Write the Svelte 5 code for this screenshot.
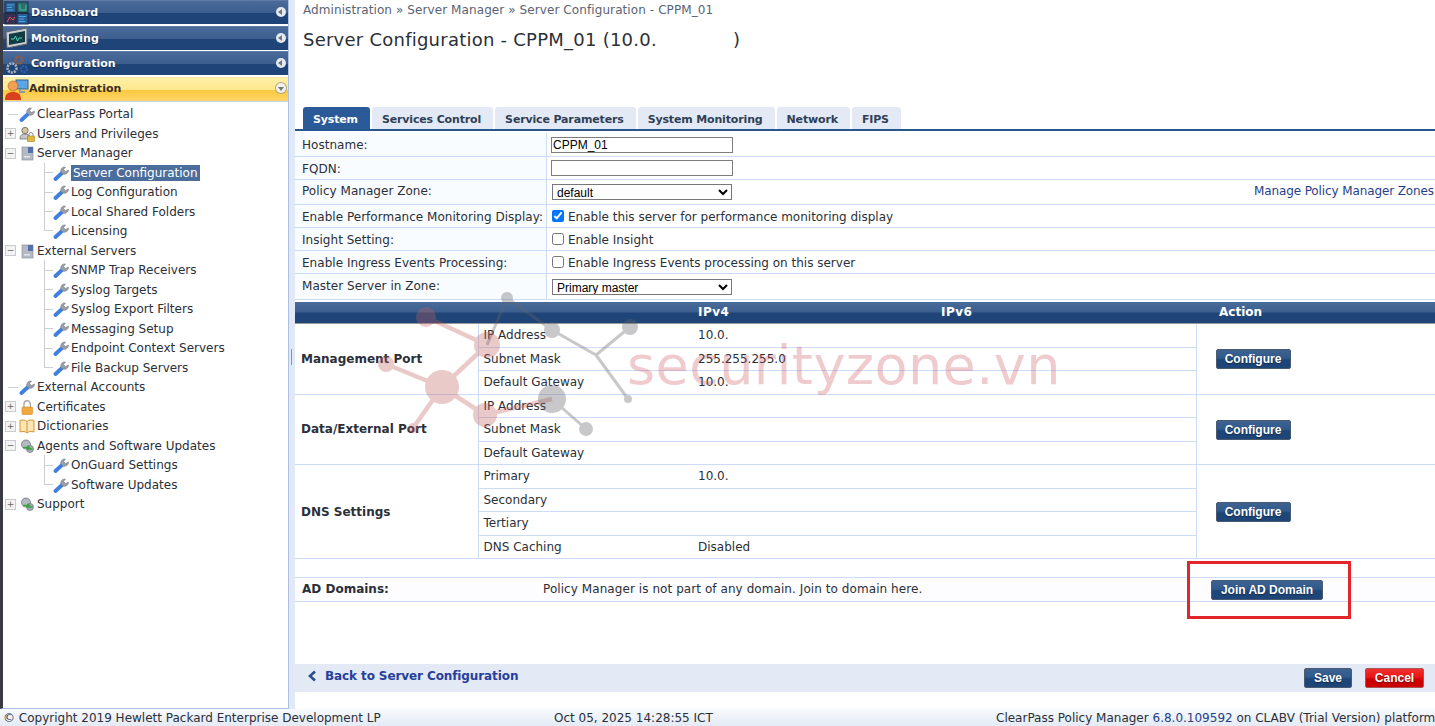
<script>
  const heads = [
    { id: 'dash', label: 'Dashboard' },
    { id: 'mon', label: 'Monitoring' },
    { id: 'conf', label: 'Configuration' }
  ];
  const tree = [
    { t: 'ClearPass Portal', d: 0, ic: 'w', ex: '' },
    { t: 'Users and Privileges', d: 0, ic: 'u', ex: '+' },
    { t: 'Server Manager', d: 0, ic: 's', ex: '-' },
    { t: 'Server Configuration', d: 1, ic: 'w', sel: true },
    { t: 'Log Configuration', d: 1, ic: 'w' },
    { t: 'Local Shared Folders', d: 1, ic: 'w' },
    { t: 'Licensing', d: 1, ic: 'w', last: true },
    { t: 'External Servers', d: 0, ic: 's', ex: '-' },
    { t: 'SNMP Trap Receivers', d: 1, ic: 'w' },
    { t: 'Syslog Targets', d: 1, ic: 'w' },
    { t: 'Syslog Export Filters', d: 1, ic: 'w' },
    { t: 'Messaging Setup', d: 1, ic: 'w' },
    { t: 'Endpoint Context Servers', d: 1, ic: 'w' },
    { t: 'File Backup Servers', d: 1, ic: 'w', last: true },
    { t: 'External Accounts', d: 0, ic: 'w', ex: '' },
    { t: 'Certificates', d: 0, ic: 'l', ex: '+' },
    { t: 'Dictionaries', d: 0, ic: 'b', ex: '+' },
    { t: 'Agents and Software Updates', d: 0, ic: 'g', ex: '-' },
    { t: 'OnGuard Settings', d: 1, ic: 'w' },
    { t: 'Software Updates', d: 1, ic: 'w', last: true },
    { t: 'Support', d: 0, ic: 'g', ex: '+' }
  ];
  const tabs = ['System', 'Services Control', 'Service Parameters', 'System Monitoring', 'Network', 'FIPS'];
  const groups = [
    { name: 'Management Port', rows: [['IP Address', '10.0.'], ['Subnet Mask', '255.255.255.0'], ['Default Gateway', '10.0.']] },
    { name: 'Data/External Port', rows: [['IP Address', ''], ['Subnet Mask', ''], ['Default Gateway', '']] },
    { name: 'DNS Settings', rows: [['Primary', '10.0.'], ['Secondary', ''], ['Tertiary', ''], ['DNS Caching', 'Disabled']] }
  ];
  const redEdges = [[426,317,487,345],[386,364,442,387],[487,345,442,387],[442,387,413,428],[442,387,485,415],[485,415,552,399]];
  const grayEdges = [[487,345,507,298],[507,298,552,330],[552,330,596,355],[630,327,596,355],[596,355,628,399],[552,399,586,429]];
  const redNodes = [[426,317,10],[487,345,13],[386,364,8],[442,387,17],[485,415,12],[413,428,5]];
  const grayNodes = [[507,298,6],[552,330,8],[630,327,8],[628,399,4],[552,399,14],[586,429,7]];
</script>

{#snippet icon(kind)}
  <svg class="ti" viewBox="0 0 16 16" aria-hidden="true">
    {#if kind === 'w'}
      <path d="M2.500 14 9 8" stroke="#3f7fe0" stroke-width="3.800" stroke-linecap="round" fill="none" />
      <path d="M8 7.500a4 4 0 0 1 4.500-5.500l-2 2.500 2 2 3-1.500a4 4 0 0 1-5.500 4z" fill="#9a9fa8" stroke="#6c7078" stroke-width=".5" />
    {:else if kind === 'u'}
      <circle cx="6" cy="4.500" r="3.200" fill="#d8c2a6" stroke="#555" stroke-width=".7" />
      <path d="M1 13c0-4 2-5 5-5s5 1 5 5z" fill="#c3c7cc" stroke="#666" stroke-width=".7" />
      <rect x="8.500" y="10" width="7" height="5.500" fill="#e2b93b" stroke="#a58520" stroke-width=".6" />
      <path d="M10 10V8.500a2 2 0 0 1 4 0V10" fill="none" stroke="#888" stroke-width="1" />
    {:else if kind === 's'}
      <rect x="3" y="2" width="11" height="13" fill="#b4bac4" stroke="#8d94a0" stroke-width=".7" />
      <rect x="9" y="2" width="5" height="6" fill="#5470a8" />
      <rect x="5" y="11" width="6" height="1.500" fill="#e4e6ea" />
    {:else if kind === 'l'}
      <path d="M5 8V5a3.200 3.200 0 0 1 6.400 0v3" fill="none" stroke="#a8a8a8" stroke-width="1.400" />
      <rect x="3" y="8" width="10.500" height="7.500" rx="1" fill="#f0a93f" stroke="#cf8a28" stroke-width=".6" />
    {:else if kind === 'b'}
      <path d="M1 2.500C4 1.500 6.500 2 8 3.500 9.500 2 12 1.500 15 2.500V14C12 13 9.500 13.500 8 15 6.500 13.500 4 13 1 14z" fill="#fbe6b6" stroke="#d9932d" stroke-width="1" />
      <path d="M8 3.500V15" stroke="#d9932d" stroke-width="1" />
    {:else}
      <circle cx="7" cy="6.500" r="4.500" fill="#b4bac2" stroke="#6e7580" stroke-width=".8" />
      <circle cx="11" cy="11" r="3.500" fill="#a5acb5" stroke="#6e7580" stroke-width=".7" />
      <path d="M4 9.500h6l-1.500-1.800M13.500 11H7.500" fill="none" stroke="#36a63c" stroke-width="1.500" />
    {/if}
  </svg>
{/snippet}

{#snippet headIcon(id)}
  <svg class="hi" viewBox="0 0 26 24" aria-hidden="true">
    {#if id === 'dash'}
      <rect x="1" y="1" width="11" height="10.500" fill="#2e5f94" stroke="#1c2c44" />
      <rect x="13" y="1" width="11" height="10.500" fill="#2f6e6e" stroke="#1c2c44" />
      <rect x="1" y="12.500" width="11" height="10.500" fill="#3a2f4f" stroke="#1c2c44" />
      <rect x="13" y="12.500" width="11" height="10.500" fill="#2a5f9a" stroke="#1c2c44" />
      <path d="M3 4h7M3 6.500h5M3 9h6M15 15.500h7M15 18h5M15 20.500h6" stroke="#4fa6e6" stroke-width="1.200" />
      <path d="M16 9V3.500M16 9h6V4" stroke="#40c0a0" fill="none" />
      <path d="M3 21l3-5 3 3 2-3" stroke="#e45a5a" fill="none" />
    {:else if id === 'mon'}
      <path d="M2 5 23 1v16L3 21z" fill="#c9cdd2" stroke="#5f6469" />
      <path d="M5 7 21 4v11L5 18z" fill="#113c44" />
      <path d="M7 12h3l1.500-3 2 5 1.500-3h3" stroke="#48d8b8" fill="none" />
    {:else if id === 'conf'}
      <circle cx="15" cy="8" r="3.500" fill="none" stroke="#9c5a3c" stroke-width="2.400" stroke-dasharray="2 1" />
      <circle cx="8" cy="16" r="4.500" fill="none" stroke="#aab0b8" stroke-width="2.600" stroke-dasharray="2 1" />
      <circle cx="20" cy="17" r="3" fill="none" stroke="#2f5fb0" stroke-width="2.200" stroke-dasharray="2 1" />
    {:else}
      <rect x="12" y="2" width="12" height="9" fill="#5aa6e8" stroke="#35618e" />
      <path d="M16 11v3h5" stroke="#8c98a8" stroke-width="2" fill="none" />
      <circle cx="9" cy="8" r="5" fill="#f0a050" stroke="#b26226" stroke-width=".6" />
      <path d="M1 22c0-6 3-8 8-8s8 2 8 8z" fill="#d8401e" />
    {/if}
  </svg>
{/snippet}

<div class="page">
  <aside class="side">
    <nav class="accordion">
      {#each heads as h}
        <div class="head">
          {@render headIcon(h.id)}
          <span>{h.label}</span>
          <i class="arrow"></i>
        </div>
      {/each}
      <div class="head open">
        {@render headIcon('admin')}
        <span>Administration</span>
        <i class="arrow down"></i>
      </div>
    </nav>
    <ul class="tree">
      {#each tree as n}
        <li class:child={n.d === 1}>
          {#if n.d === 1}
            <span class="guide" class:last={n.last}></span>
          {:else if n.ex === ''}
            <span class="dash"></span>
          {:else}
            <span class="box">{n.ex === '+' ? '+' : '−'}</span>
          {/if}
          {@render icon(n.ic)}
          <span class="label" class:picked={n.sel}>{n.t}</span>
        </li>
      {/each}
    </ul>
  </aside>
  <div class="split"></div>
  <main class="main">
    <div class="crumbs">Administration » Server Manager » Server Configuration - CPPM_01</div>
    <h1>Server Configuration - CPPM_01 (10.0.<span class="blank"></span>)</h1>
    <div class="tabs">
      {#each tabs as t, i}
        <span class="tab" class:on={i === 0}>{t}</span>
      {/each}
    </div>

    <div class="form">
      <div class="fr r24"><div class="fl">Hostname:</div><div class="fv"><input class="txt" value="CPPM_01" /></div></div>
      <div class="fr r23"><div class="fl">FQDN:</div><div class="fv"><input class="txt" value="" /></div></div>
      <div class="fr r25">
        <div class="fl up3">Policy Manager Zone:</div>
        <div class="fv between"><select class="drop"><option>default</option></select><a href="#zones" class="zones">Manage Policy Manager Zones</a></div>
      </div>
      <div class="fr r23"><div class="fl">Enable Performance Monitoring Display:</div><div class="fv"><label><input type="checkbox" checked /> Enable this server for performance monitoring display</label></div></div>
      <div class="fr r23"><div class="fl">Insight Setting:</div><div class="fv"><label><input type="checkbox" /> Enable Insight</label></div></div>
      <div class="fr r23"><div class="fl">Enable Ingress Events Processing:</div><div class="fv"><label><input type="checkbox" /> Enable Ingress Events processing on this server</label></div></div>
      <div class="fr r26"><div class="fl up1">Master Server in Zone:</div><div class="fv"><select class="drop"><option>Primary master</option></select></div></div>
    </div>

    <table class="ports">
      <colgroup><col class="c1" /><col class="c2" /><col class="c3" /><col class="c4" /><col /></colgroup>
      <thead>
        <tr><th colspan="2"></th><th class="ip">IPv4</th><th class="ip">IPv6</th><th class="act">Action</th></tr>
      </thead>
      <tbody>
        {#each groups as g, gi}
          {#each g.rows as r, i}
            <tr>
              {#if i === 0}
                <td class="gname" rowspan={g.rows.length}>{g.name}</td>
              {/if}
              <td class="k">{r[0]}</td>
              <td class="v" colspan="2">{r[1]}</td>
              {#if i === 0}
                <td class="ac" class:nudge={gi === 1} rowspan={g.rows.length}><button class="btn cfg">Configure</button></td>
              {/if}
            </tr>
          {/each}
        {/each}
      </tbody>
    </table>

    <div class="ad">
      <strong>AD Domains:</strong>
      <span class="adtext">Policy Manager is not part of any domain. Join to domain here.</span>
      <button class="btn join">Join AD Domain</button>
    </div>

    <div class="bar">
      <a href="#back" class="back">
        <svg viewBox="0 0 10 12" class="chev" aria-hidden="true"><path d="M8 1.500 3 6l5 4.500" fill="none" stroke="#2a4f8f" stroke-width="2.600" /></svg>
        Back to Server Configuration
      </a>
      <div class="acts">
        <button class="btn save">Save</button>
        <button class="btn cancel">Cancel</button>
      </div>
    </div>
  </main>

  <footer class="foot">
    <span>© Copyright 2019 Hewlett Packard Enterprise Development LP</span>
    <span>Oct 05, 2025 14:28:55 ICT</span>
    <span>ClearPass Policy Manager <a href="#v">6.8.0.109592</a> on CLABV (Trial Version) platform</span>
  </footer>

  <svg class="mark" viewBox="0 0 1435 726" aria-hidden="true">
    <g class="redg">
      {#each redEdges as e}<line x1={e[0]} y1={e[1]} x2={e[2]} y2={e[3]} />{/each}
      {#each redNodes as n}<circle cx={n[0]} cy={n[1]} r={n[2]} />{/each}
    </g>
    <g class="grayg">
      {#each grayEdges as e}<line x1={e[0]} y1={e[1]} x2={e[2]} y2={e[3]} />{/each}
      {#each grayNodes as n}<circle cx={n[0]} cy={n[1]} r={n[2]} />{/each}
    </g>
  </svg>
  <div class="marktext">securityzone.vn</div>
  <div class="redbox"></div>
</div>

<style>
  :global(body) { margin: 0; background: #fff; }
  .page {
    position: relative;
    width: 1435px;
    height: 726px;
    overflow: hidden;
    display: grid;
    grid-template-columns: 289px 6px 1140px;
    grid-template-rows: 709px 17px;
    font: 12px "DejaVu Sans", Verdana, sans-serif;
    color: #2b2f38;
    background: #fff;
  }
  .side {
    border-left: 3px solid #3a3a42;
    border-right: 1px solid #aebfe4;
    border-bottom: 1px solid #aebfe4;
    box-sizing: border-box;
    background: #fff;
    min-width: 0;
  }
  .split { background: linear-gradient(#8a93a8, #8a93a8) 2px 349px / 1px 16px no-repeat, #e2e9f6; }
  .accordion { display: flex; flex-direction: column; }
  .head {
    height: 24px;
    margin-bottom: 1px;
    display: flex;
    align-items: center;
    position: relative;
    padding-left: 28px;
    color: #fff;
    font-weight: bold;
    font-size: 11px;
    text-shadow: 0 1px 1px #12294b;
    background: linear-gradient(#4a6b9a 0, #3c5f8f 50%, #1f4578 52%, #1f4578 100%);
    border-top: 1px solid #5d7ba5;
    box-sizing: border-box;
  }
  .head:nth-child(2) { margin-top: 1px; }
  .head.open {
    height: 25px;
    margin-top: 1px;
    padding-left: 26px;
    padding-bottom: 3px;
    color: #3a2f1f;
    text-shadow: none;
    background: linear-gradient(#fff0a8 0, #ffe98e 50%, #fcc93e 54%, #fed568 100%);
    border-top: 1px solid #f6e9b0;
    border-bottom: 1px solid #c8d2e8;
    margin-bottom: 0;
  }
  .hi { position: absolute; left: 1px; top: 0; width: 26px; height: 24px; }
  .arrow {
    position: absolute;
    right: 2px;
    top: 6px;
    width: 10px;
    height: 10px;
    border-radius: 50%;
    background: #e6e9ee;
  }
  .arrow::after {
    content: "";
    position: absolute;
    left: 2px;
    top: 2px;
    border: 3px solid transparent;
    border-left-width: 0;
    border-right: 4px solid #6f7782;
  }
  .arrow.down { background: #f4f1e8; box-shadow: 0 0 0 1px #b0a888; top: 5px; }
  .arrow.down::after {
    left: 2px;
    top: 4px;
    border: 3px solid transparent;
    border-bottom-width: 0;
    border-top: 4px solid #6f7782;
  }
  .tree { list-style: none; margin: 2.300px 0 0; padding: 0; }
  .tree li {
    height: 19.500px;
    display: flex;
    align-items: center;
    padding-left: 2px;
    white-space: nowrap;
  }
  .tree li.child { padding-left: 41px; }
  .ti { width: 16px; height: 16px; flex: none; margin: 0 2px 0 0; }
  .dash {
    width: 10px;
    height: 1px;
    margin: 0 1px 0 3px;
    background: #ccd0d6;
    flex: none;
  }
  .box {
    width: 9px;
    height: 9px;
    margin-right: 3px;
    flex: none;
    border: 1px solid #c8ccd2;
    box-sizing: content-box;
    font: 9px/9px "DejaVu Sans", sans-serif;
    text-align: center;
    color: #666;
    background: #f3f3f3;
  }
  .guide {
    flex: none;
    width: 9px;
    height: 100%;
    border-left: 1px solid #ccd0d6;
    box-sizing: border-box;
    background: linear-gradient(#ccd0d6, #ccd0d6) 0 50% / 100% 1px no-repeat;
  }
  .guide.last { height: 50%; align-self: flex-start; background-position: 0 100%; }
  .label { line-height: 16px; }
  .label.picked { background: #4a6d9c; color: #fff; padding: 0 2px; }
  .main { min-width: 0; display: flex; flex-direction: column; }
  .crumbs { padding: 3px 0 0 8px; height: 16px; color: #5a6373; line-height: 15px; letter-spacing: .09px; }
  h1 {
    margin: 4px 0 0;
    padding-left: 8px;
    height: 84px;
    box-sizing: border-box;
    line-height: 33px;
    font-size: 18px;
    font-weight: normal;
    letter-spacing: .24px;
    color: #2b2f38;
  }
  .blank { display: inline-block; width: 76px; }
  .tabs {
    display: flex;
    gap: 2px;
    height: 24px;
    padding-left: 8px;
    box-sizing: border-box;
    border-bottom: 2px solid #28578f;
  }
  .tab {
    padding: 3px 12px 0 10px;
    line-height: 19px;
    font-weight: bold;
    font-size: 11px;
    letter-spacing: -.15px;
    color: #2f3f55;
    background: #e4eaf5;
    border-radius: 3px 3px 0 0;
  }
  .tab.on { background: #2a5a98; color: #fff; }
  .form { margin: 2px 0 1.500px; display: flex; flex-direction: column; }
  .fr {
    display: grid;
    grid-template-columns: 252px 1fr;
    border-bottom: 1px solid #cddcf6;
    box-sizing: border-box;
  }
  .r24 { height: 24px; }
  .r23 { height: 23px; }
  .r25 { height: 25px; }
  .r26 { height: 26px; }
  .fl {
    padding-left: 7px;
    background: #f8fcff;
    border-right: 1px solid #cddcf6;
    display: flex;
    align-items: center;
    white-space: nowrap;
    letter-spacing: .03px;
  }
  .r23 .fl, .r23 label { padding-top: 1px; }
  .up3 { padding-bottom: 3px; }
  .up1 { padding-bottom: 1px; }
  .fv { display: flex; align-items: center; padding-left: 4px; min-width: 0; white-space: nowrap; }
  .between { justify-content: space-between; padding-right: 1px; }
  .zones { color: #263f8a; text-decoration: none; letter-spacing: -.11px; margin-bottom: 2px; }
  .txt {
    width: 182px;
    box-sizing: border-box;
    height: 16px;
    padding: 0 1px;
    border: 1px solid #7d7d7d;
    font: 12px "Liberation Sans", Arial, sans-serif;
    color: #000;
    margin: 0;
    background: #fff;
  }
  .drop {
    width: 180px;
    height: 16px;
    margin-left: 1px;
    padding: 0;
    border: 1px solid #777;
    border-radius: 0;
    font: 12px "Liberation Sans", Arial, sans-serif;
    background: #fff;
    color: #000;
  }
  label { display: flex; align-items: center; }
  input[type="checkbox"] { margin: 0 4px 2px 1px; width: 12px; height: 12px; }
  .ports {
    width: 1140px;
    table-layout: fixed;
    border-collapse: collapse;
  }
  .c1 { width: 183px; }
  .c2 { width: 214px; }
  .c3 { width: 243px; }
  .c4 { width: 261px; }
  .ports th {
    height: 22px;
    padding: 0 0 0 6px;
    text-align: left;
    color: #fff;
    font-size: 12px;
    font-weight: bold;
    background: linear-gradient(#4a6b9a 0, #3c5f8f 48%, #1f4578 52%, #1f4578 100%);
    border-bottom: 1px solid #9a9a9a;
    box-sizing: border-box;
  }
  .ports th.ip { letter-spacing: .5px; }
  .ports th.act { padding-left: 23px; }
  .ports td {
    padding: 0;
    border-bottom: 1px solid #cddcf6;
    height: 23.500px;
    box-sizing: border-box;
  }
  .gname {
    font-weight: bold;
    padding-left: 6px !important;
    border-right: 1px solid #cddcf6;
    color: #2b2f38;
  }
  .k { padding-left: 5px !important; }
  .v { padding-left: 6px !important; }
  .ac { border-left: 1px solid #cddcf6; padding-left: 19px !important; }
  .ac.nudge { padding-top: 2px !important; }
  .btn {
    font: bold 12px "Liberation Sans", Arial, sans-serif;
    color: #fff;
    border: 1px solid #4a5a70;
    border-radius: 2px;
    background: linear-gradient(#3e628f 0, #2f5a8e 45%, #1e4577 55%, #1e4577 100%);
    text-shadow: 0 1px 1px #11294a;
    padding: 0;
    height: 20px;
    display: block;
  }
  .cfg { width: 75px; }
  .join { width: 112px; }
  .save { width: 48px; }
  .cancel {
    width: 59px;
    background: linear-gradient(#f03030 0, #e91010 50%, #cc0000 55%, #cc0000 100%);
    border-color: #a55;
    text-shadow: 0 1px 1px #700;
  }
  .ad {
    margin-top: 18px;
    height: 25px;
    box-sizing: border-box;
    display: flex;
    align-items: center;
    padding-left: 7px;
    background: #fdfcff;
    border-top: 1px solid #cddcf6;
    border-bottom: 1px solid #cddcf6;
  }
  .ad strong { width: 241px; flex: none; margin-bottom: 2px; }
  .adtext { width: 668px; flex: none; margin-bottom: 2px; letter-spacing: .07px; }
  .bar {
    margin-top: 62px;
    height: 28px;
    background: #e3e9f5;
    display: flex;
    align-items: center;
    justify-content: space-between;
    padding: 0 11px 0 12px;
  }
  .back {
    display: flex;
    align-items: center;
    gap: 8px;
    font-weight: bold;
    font-size: 12px;
    letter-spacing: -.1px;
    padding-bottom: 4px;
    color: #26409a;
    text-decoration: none;
  }
  .chev { width: 10px; height: 12px; }
  .acts { display: flex; gap: 13px; }
  .foot {
    grid-column: 1 / -1;
    display: grid;
    grid-template-columns: 551px 442px 1fr;
    align-items: center;
    padding-left: 3px;
    white-space: nowrap;
    overflow: hidden;
    background: linear-gradient(#f7f9fc, #e4ebf6);
    color: #2b2f38;
    box-sizing: border-box;
  }
  .foot a { color: #263f8a; text-decoration: none; }
  .mark { position: absolute; inset: 0; width: 1435px; height: 726px; pointer-events: none; }
  .redg { opacity: .33; fill: rgb(194, 95, 95); stroke: rgb(194, 95, 95); }
  .redg line { stroke-width: 4.500; }
  .redg circle { stroke: none; }
  .grayg { opacity: .35; fill: rgb(101, 101, 105); stroke: rgb(101, 101, 105); }
  .grayg line { stroke-width: 3; }
  .grayg circle { stroke: none; }
  .marktext {
    position: absolute;
    left: 627px;
    top: 338px;
    font: 54px/56px "DejaVu Sans", sans-serif;
    letter-spacing: .4px;
    color: rgba(200, 70, 80, .28);
    pointer-events: none;
  }
  .redbox {
    position: absolute;
    left: 1187px;
    top: 561px;
    width: 164px;
    height: 58px;
    box-sizing: border-box;
    border: 3px solid #e3262b;
    pointer-events: none;
  }
</style>
